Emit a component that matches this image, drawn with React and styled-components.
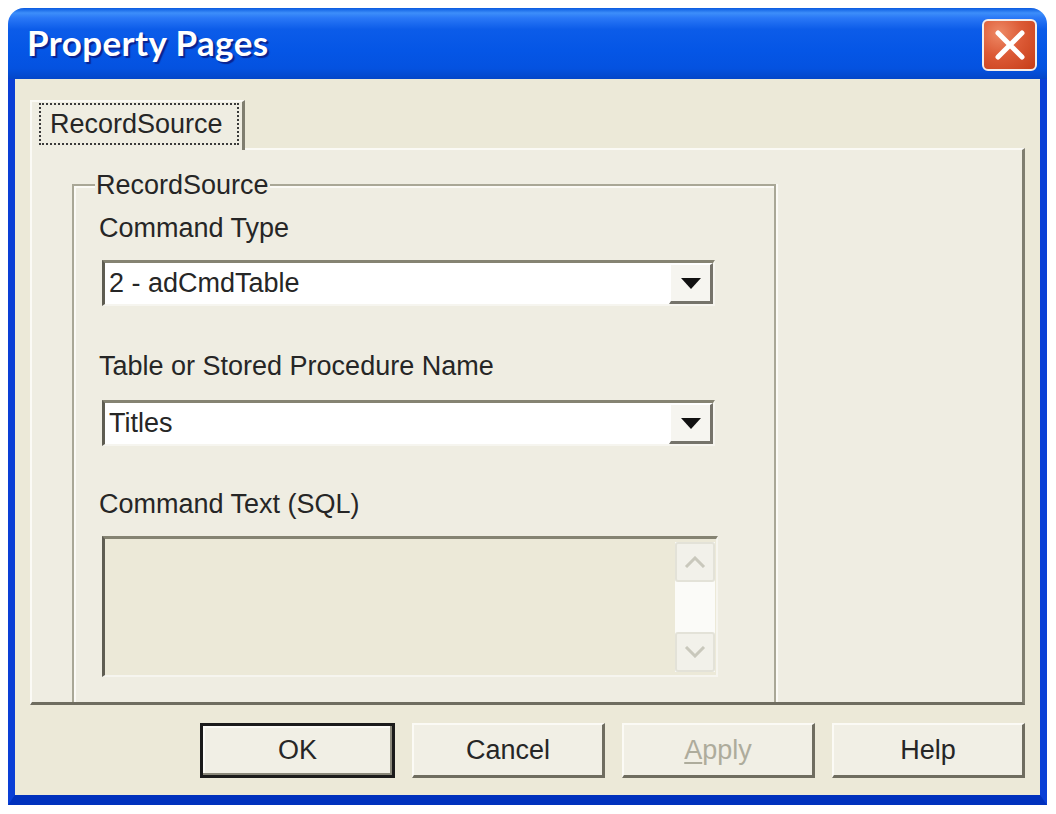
import React from 'react'
import styled, { createGlobalStyle } from 'styled-components'

const GlobalStyle = createGlobalStyle`
  html, body { margin: 0; padding: 0; background: #fff; }
  body { font-family: "Liberation Sans", Arial, sans-serif; }
`

const Window = styled.div`
  margin: 8px 0 0 8px; width: 1039px;
`

const TitleBar = styled.div`
  height: 71px; display: flex; align-items: center; justify-content: space-between;
  padding: 0 10px 0 19px; box-sizing: border-box;
  border-radius: 16px 16px 0 0;
  background: linear-gradient(to bottom, #0a5ae0 0%, #3d8efa 7%, #2a78f6 14%, #0c5ce9 30%, #0556e6 60%, #0452e0 85%, #0446c8 100%);
`

const Title = styled.div`
  font-family: Lato, "Open Sans", sans-serif; font-weight: 700; font-size: 35px; color: #fff;
  text-shadow: 2px 2px 1px #0a2390; letter-spacing: 0.4px; margin-top: -4px;
`

const CloseButton = styled.div`
  width: 55px; height: 52px; box-sizing: border-box; border: 2px solid #f4eeea; border-radius: 6px;
  background: radial-gradient(circle at 30% 25%, #ee8a66 0%, #dc5a36 45%, #c63d18 100%);
  display: flex; align-items: center; justify-content: center; margin-top: 3px;
`

const Body = styled.div`
  background: #ece9d8; height: 726px; box-sizing: border-box;
  border-left: 7px solid #0a3fd6; border-right: 7px solid #0a3fd6; border-bottom: 10px solid #0031bd;
  padding: 21px 15px 0 15px;
`

const TabStrip = styled.div`
  display: flex; height: 48px; position: relative; z-index: 1;
`

const Tab = styled.div`
  width: 215px; height: 50px; box-sizing: border-box; background: #efede2;
  border-top: 2px solid #fbfaf5; border-left: 2px solid #fbfaf5; border-right: 3px solid #807e70;
  padding: 1px 3px 5px 7px;
`

const TabFocus = styled.div`
  height: 100%; box-sizing: border-box; border: 2px dotted #3a3a3a;
  display: flex; align-items: center; padding-left: 9px;
  font-size: 27px; color: #262626;
`

const Panel = styled.div`
  height: 557px; box-sizing: border-box; overflow: hidden; background: #efede2;
  border-top: 2px solid #fbfaf5; border-left: 2px solid #fbfaf5;
  border-right: 3px solid #807e70; border-bottom: 3px solid #6f6d60;
  padding: 20px 0 0 40px;
`

const GroupBox = styled.fieldset`
  margin: 0; width: 704px; height: 560px; box-sizing: border-box;
  border: 2px solid #a9a796; border-bottom: none;
  box-shadow: inset 2px 2px 0 #fbfaf5, 2px 0 0 #fbfaf5;
  padding: 0 0 0 25px; display: flex; flex-direction: column; align-items: flex-start;
`

const Legend = styled.legend`
  font-size: 27px; line-height: 30px; color: #262626; background: #efede2;
  padding: 0 1px; margin-left: -4px;
`

const Label = styled.div`
  font-size: 27px; line-height: 30px; color: #262626; margin-top: ${p => p.$top}px;
`

const Combo = styled.div`
  margin-top: ${p => p.$top}px; margin-left: 3px;
  width: 613px; height: 46px; box-sizing: border-box; background: #fff;
  border-top: 3px solid #858372; border-left: 3px solid #5f5d52;
  border-right: 2px solid #f6f5ef; border-bottom: 2px solid #f6f5ef;
  display: flex; align-items: stretch;
`

const ComboText = styled.div`
  flex: 1; display: flex; align-items: center; padding-left: 4px;
  font-size: 27px; color: #262626;
`

const DropButton = styled.div`
  width: 44px; box-sizing: border-box; background: #f6f5f0;
  border-right: 3px solid #75736a; border-bottom: 3px solid #75736a;
  border-top: 2px solid #fff; border-left: 2px solid #fff;
  display: flex; align-items: center; justify-content: center;
`

const TextBox = styled.div`
  margin-top: ${p => p.$top}px; margin-left: 3px;
  width: 616px; height: 141px; box-sizing: border-box; background: #ece9d8;
  border-top: 3px solid #858372; border-left: 3px solid #5f5d52;
  border-right: 2px solid #f6f5ef; border-bottom: 2px solid #f6f5ef;
  display: flex; justify-content: flex-end; padding: 3px 1px 3px 0;
`

const ScrollBar = styled.div`
  width: 40px; display: flex; flex-direction: column; background: #fafaf6;
`

const ScrollButton = styled.div`
  height: 40px; box-sizing: border-box; border: 2px solid #e3e2d8; border-radius: 3px;
  background: #f2f1ea; display: flex; align-items: center; justify-content: center;
`

const ScrollTrack = styled.div`
  flex: 1; background: #fbfbf8;
`

const ButtonRow = styled.div`
  display: flex; justify-content: flex-end; gap: 17px; margin-top: 18px;
`

const Button = styled.div`
  width: 193px; height: 55px; box-sizing: border-box; background: #f1efe5;
  border-top: 2px solid #fbfaf5; border-left: 2px solid #fbfaf5;
  border-right: 3px solid #6f6d60; border-bottom: 3px solid #6f6d60;
  display: flex; align-items: center; justify-content: center;
  font-size: 27px; color: ${p => (p.$disabled ? '#aeac9c' : '#262626')};
  ${p => p.$default && `
    width: 195px; border: 3px solid #1b1b1b; box-shadow: inset -2px -2px 0 #8a887a, inset 2px 2px 0 #fbfaf5;
  `}
  u { text-decoration-thickness: 2px; text-underline-offset: 3px; }
`

const Arrow = () => (
  <svg width="20" height="11" viewBox="0 0 20 11"><path d="M0 0 H20 L10 11 Z" fill="#111" /></svg>
)

const Chevron = ({ up }) => (
  <svg width="22" height="12" viewBox="0 0 22 12">
    <path d={up ? 'M2 11 L11 2 L20 11' : 'M2 1 L11 10 L20 1'} fill="none" stroke="#c9c8bc" strokeWidth="3" />
  </svg>
)

const App = () => {
  return (
    <>
      <GlobalStyle />
      <Window>
        <TitleBar>
          <Title>Property Pages</Title>
          <CloseButton>
            <svg width="34" height="32" viewBox="0 0 34 32">
              <path d="M5 4 L29 28 M29 4 L5 28" stroke="#fff" strokeWidth="5" strokeLinecap="round" />
            </svg>
          </CloseButton>
        </TitleBar>
        <Body>
          <TabStrip>
            <Tab><TabFocus>RecordSource</TabFocus></Tab>
          </TabStrip>
          <Panel>
            <GroupBox>
              <Legend>RecordSource</Legend>
              <Label $top={13}>Command Type</Label>
              <Combo $top={17}>
                <ComboText>2 - adCmdTable</ComboText>
                <DropButton><Arrow /></DropButton>
              </Combo>
              <Label $top={45}>Table or Stored Procedure Name</Label>
              <Combo $top={19}>
                <ComboText>Titles</ComboText>
                <DropButton><Arrow /></DropButton>
              </Combo>
              <Label $top={43}>Command Text (SQL)</Label>
              <TextBox $top={17}>
                <ScrollBar>
                  <ScrollButton><Chevron up /></ScrollButton>
                  <ScrollTrack />
                  <ScrollButton><Chevron /></ScrollButton>
                </ScrollBar>
              </TextBox>
            </GroupBox>
          </Panel>
          <ButtonRow>
            <Button $default>OK</Button>
            <Button>Cancel</Button>
            <Button $disabled><span><u>A</u>pply</span></Button>
            <Button>Help</Button>
          </ButtonRow>
        </Body>
      </Window>
    </>
  )
}

export default App
